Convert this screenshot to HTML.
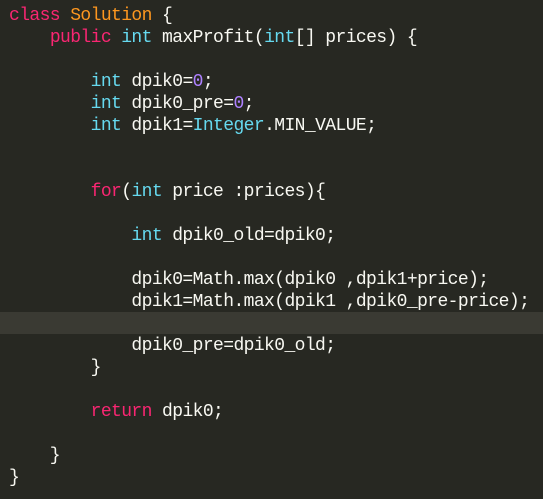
<!DOCTYPE html>
<html><head><style>
html,body{margin:0;padding:0;background:#272822;width:543px;height:499px;overflow:hidden}
pre{margin:0;padding:5px 0 0 9px;font-family:"Liberation Mono",monospace;font-size:18px;letter-spacing:-0.6px;line-height:22px;color:#f8f8f2;position:relative}
.k{color:#f92672}.c{color:#fd971f}.t{color:#66d9ef}.n{color:#ae81ff}
.hl{position:absolute;left:0;top:312px;width:543px;height:22px;background:#3a3a33}
</style></head><body>
<div class="hl"></div>
<pre><span class="k">class</span> <span class="c">Solution</span> {
    <span class="k">public</span> <span class="t">int</span> maxProfit(<span class="t">int</span>[] prices) {

        <span class="t">int</span> dpik0=<span class="n">0</span>;
        <span class="t">int</span> dpik0_pre=<span class="n">0</span>;
        <span class="t">int</span> dpik1=<span class="t">Integer</span>.MIN_VALUE;


        <span class="k">for</span>(<span class="t">int</span> price :prices){

            <span class="t">int</span> dpik0_old=dpik0;

            dpik0=Math.max(dpik0 ,dpik1+price);
            dpik1=Math.max(dpik1 ,dpik0_pre-price);

            dpik0_pre=dpik0_old;
        }

        <span class="k">return</span> dpik0;

    }
}</pre>
</body></html>
